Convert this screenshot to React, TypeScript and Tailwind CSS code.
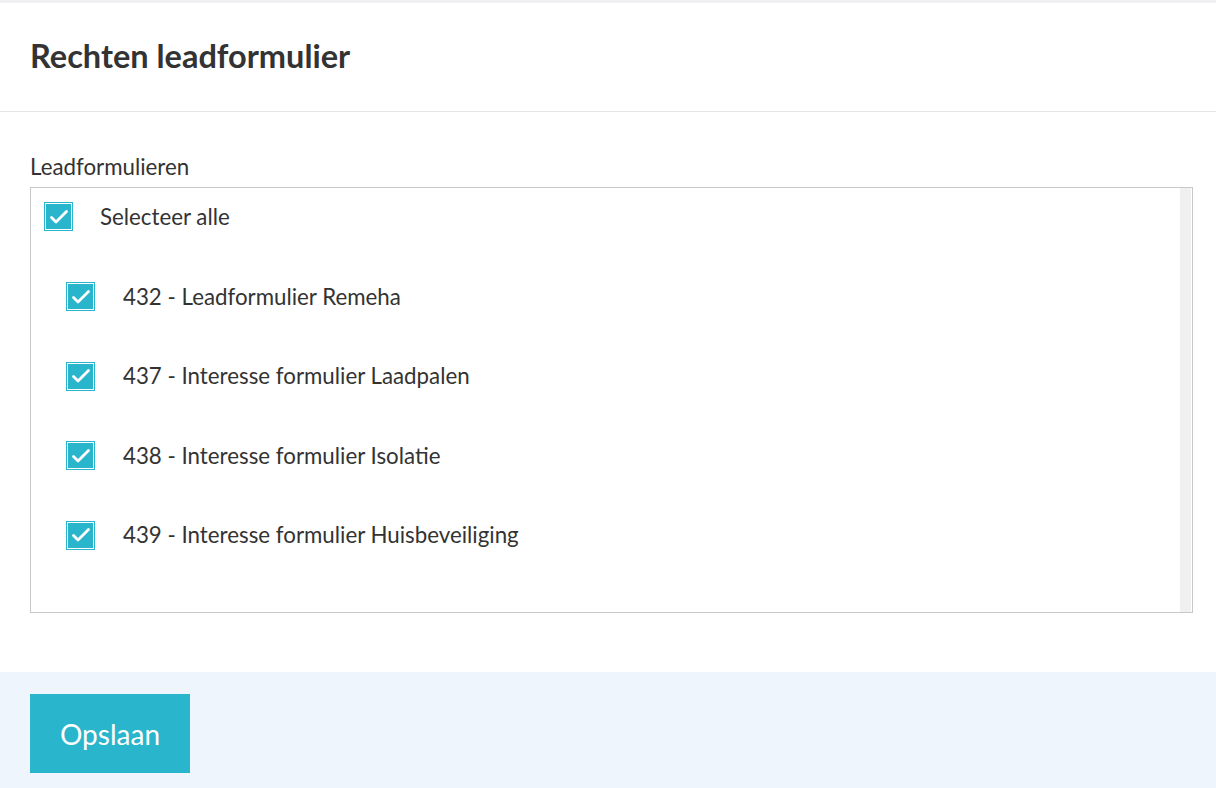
import { useState } from 'react';

type Form = { id: number; name: string };

const forms: Form[] = [
    { id: 432, name: 'Leadformulier Remeha' },
    { id: 437, name: 'Interesse formulier Laadpalen' },
    { id: 438, name: 'Interesse formulier Isolatie' },
    { id: 439, name: 'Interesse formulier Huisbeveiliging' },
];

const Check = ({ checked, onClick }: { checked: boolean; onClick: () => void }) => (
    <button
        onClick={onClick}
        className={`size-[29px] shrink-0 p-px ${checked ? 'bg-[#29b5cc]' : 'bg-white border border-[#c8c8c8]'}`}
    >
        {checked && (
            <span className="flex size-full items-center justify-center border border-white bg-[#29b5cc]">
                <svg viewBox="0 0 24 24" className="size-[24px]" fill="none" stroke="white" strokeWidth={2.8} strokeLinecap="round" strokeLinejoin="round">
                    <path d="M4.5 12.5l4.5 4.5L19.5 6.5" />
                </svg>
            </span>
        )}
    </button>
);

export default function App() {
    const [selected, setSelected] = useState<number[]>(forms.map(f => f.id));
    const allSelected = selected.length === forms.length;

    const toggle = (id: number) =>
        setSelected(s => (s.includes(id) ? s.filter(x => x !== id) : [...s, id]));

    return (
        <div className="min-h-[788px] bg-white text-[#333] font-['Lato','Noto_Sans',sans-serif] flex flex-col">
            <div className="h-[3px] bg-[#f0f0f2]" />

            {/* header */}
            <div className="h-[109px] border-b border-[#e6e6e6] px-[30px] flex items-center">
                <h1 className="text-[32.5px] font-bold leading-none pb-[2px]">Rechten leadformulier</h1>
            </div>

            {/* body */}
            <div className="pr-[23px] pl-[30px] pt-[43px] pb-[59px]">
                <div className="text-[22.3px] leading-[24px] mb-[8px]">Leadformulieren</div>
                <div className="h-[426px] border border-[#c8c8c8] flex">
                    <div className="flex-1 pt-[14px]">
                        <div className="flex items-center pl-[13px] h-[29px]">
                            <Check checked={allSelected} onClick={() => setSelected(allSelected ? [] : forms.map(f => f.id))} />
                            <span className="ml-[27px] text-[22.3px]">Selecteer alle</span>
                        </div>
                        <div className="flex flex-col gap-[50.5px] pl-[35px] pt-[51px]">
                            {forms.map(f => (
                                <div key={f.id} className="flex items-center h-[29px]">
                                    <Check checked={selected.includes(f.id)} onClick={() => toggle(f.id)} />
                                    <span className="ml-[28px] text-[22.3px]">{f.id} - {f.name}</span>
                                </div>
                            ))}
                        </div>
                    </div>
                    <div className="w-[11px] bg-[#f0f0f0] mr-px" />
                </div>
            </div>

            {/* footer */}
            <div className="flex-1 bg-[#eef5fc] px-[30px] pt-[22px]">
                <button className="w-[160px] h-[79px] bg-[#29b5cc] text-white text-[28px]">Opslaan</button>
            </div>
        </div>
    );
}
